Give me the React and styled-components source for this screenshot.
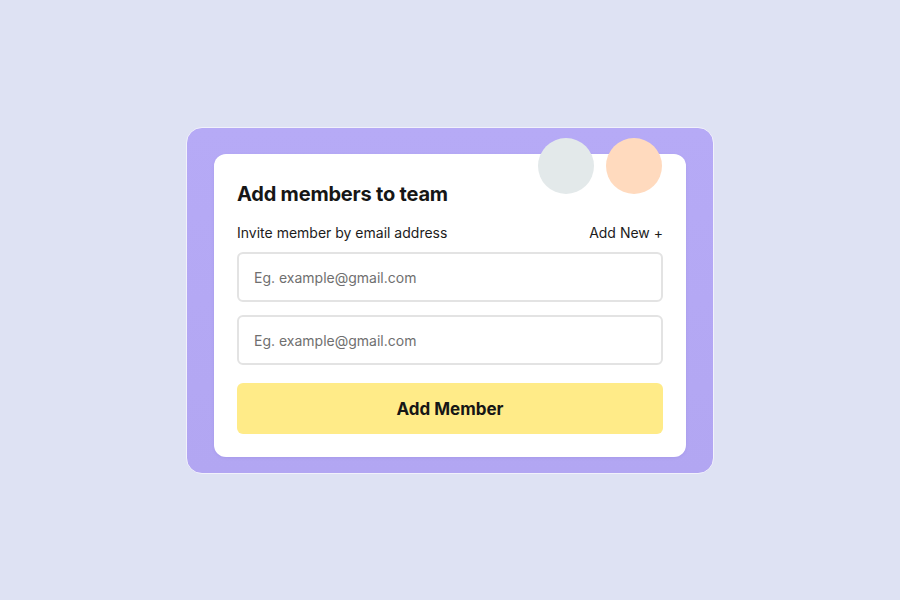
import React from 'react'
import styled, { createGlobalStyle } from 'styled-components'

const GlobalStyle = createGlobalStyle`
  html, body {
    margin: 0;
    padding: 0;
    background: #dee2f3;
  }
  body {
    font-family: 'Inter', 'Liberation Sans', sans-serif;
  }
`

export const Page = styled.div`
  width: 900px;
  height: 600px;
  box-sizing: border-box;
  padding: 127px 0 0 186px;
  background: #dee2f3;
`

export const Frame = styled.div`
  position: relative;
  width: 528px;
  box-sizing: border-box;
  padding: 26px 27px 16px 27px;
  background: linear-gradient(180deg, #b6aaf6 0%, #b2a6f2 100%);
  border: 1px solid #f1f1fb;
  border-radius: 16px;
`

export const Card = styled.div`
  background: #ffffff;
  border-radius: 12px;
  padding: 27px 23px 23px 23px;
  display: flex;
  flex-direction: column;
  box-shadow: 0 1px 3px rgba(90, 70, 180, 0.12);
`

export const Bubbles = styled.div`
  position: absolute;
  top: 10px;
  right: 51px;
  display: flex;
  gap: 12px;
`

export const Bubble = styled.div`
  width: 56px;
  height: 56px;
  border-radius: 50%;
  background: ${p => p.$color};
`

export const Title = styled.h1`
  margin: 0 0 17px 0;
  font-size: 20px;
  line-height: 26px;
  font-weight: 700;
  color: #161616;
  letter-spacing: -0.2px;
`

export const LabelRow = styled.div`
  display: flex;
  justify-content: space-between;
  align-items: center;
  font-size: 14px;
  color: #1c1c1c;
  margin-bottom: 11px;
`

export const AddNew = styled.span`
  cursor: pointer;
`

export const Field = styled.input`
  height: 50px;
  box-sizing: border-box;
  border: 2px solid #e3e3e3;
  border-radius: 6px;
  padding: 0 15px;
  font-family: inherit;
  font-size: 14px;
  color: #333;
  margin-bottom: 13px;
  outline: none;
  &::placeholder {
    color: #6f6f6f;
  }
`

export const Button = styled.button`
  margin-top: 5px;
  height: 51px;
  border: none;
  border-radius: 6px;
  background: #ffeb88;
  font-family: inherit;
  font-size: 17px;
  font-weight: 700;
  color: #161616;
  cursor: pointer;
`

const App = () => {
  return (
    <>
      <GlobalStyle />
      <Page>
        <Frame>
          <Bubbles>
            <Bubble $color='#e3e9ea' />
            <Bubble $color='#ffdabe' />
          </Bubbles>
          <Card>
            <Title>Add members to team</Title>
            <LabelRow>
              <span>Invite member by email address</span>
              <AddNew>Add New +</AddNew>
            </LabelRow>
            <Field placeholder='Eg. example@gmail.com' />
            <Field placeholder='Eg. example@gmail.com' />
            <Button>Add Member</Button>
          </Card>
        </Frame>
      </Page>
    </>
  )
}

export default App
